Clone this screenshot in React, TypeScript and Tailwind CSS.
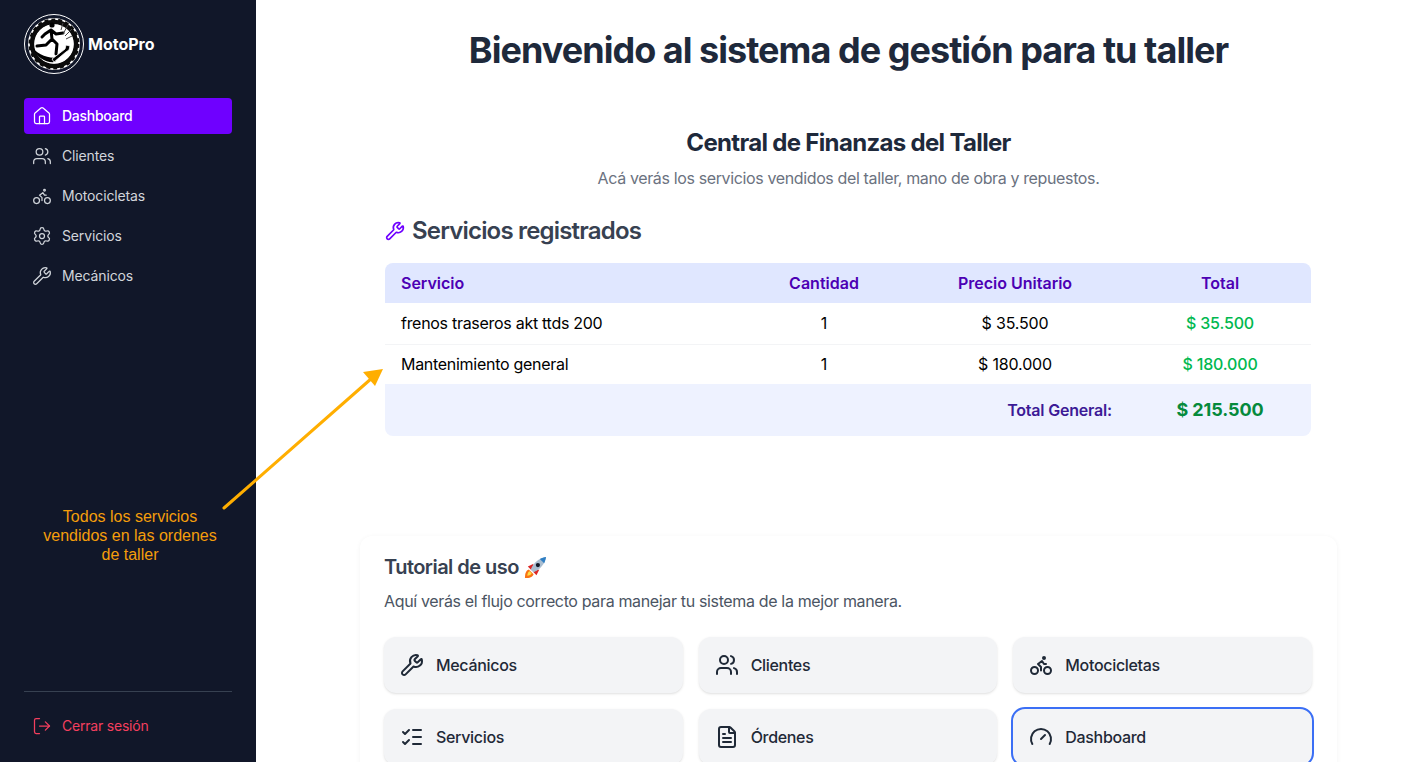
import React from 'react'
import { Bike, FileText, Gauge, House, ListChecks, LogOut, Settings, Users, Wrench } from 'lucide-react'

const navItems = [
  { label: 'Dashboard', icon: House, active: true },
  { label: 'Clientes', icon: Users },
  { label: 'Motocicletas', icon: Bike },
  { label: 'Servicios', icon: Settings },
  { label: 'Mecánicos', icon: Wrench },
]

const services = [
  { name: 'frenos traseros akt ttds 200', qty: 1, price: '$ 35.500', total: '$ 35.500' },
  { name: 'Mantenimiento general', qty: 1, price: '$ 180.000', total: '$ 180.000' },
]

const steps = [
  { label: 'Mecánicos', icon: Wrench },
  { label: 'Clientes', icon: Users },
  { label: 'Motocicletas', icon: Bike },
  { label: 'Servicios', icon: ListChecks },
  { label: 'Órdenes', icon: FileText },
  { label: 'Dashboard', icon: Gauge, selected: true },
]

function Logo() {
  return (
    <svg viewBox="0 0 60 60" className="w-[60px] h-[60px] shrink-0">
      <circle cx="30" cy="30" r="29.500" fill="#111729" stroke="#fff" strokeWidth="1" />
      <circle cx="30" cy="30" r="26" fill="#fff" />
      <circle cx="30" cy="30" r="22" fill="none" stroke="#0b0b0b" strokeWidth="4.500" />
      <circle cx="30" cy="30" r="24.500" fill="none" stroke="#0b0b0b" strokeWidth="2" strokeDasharray="4 3" />
      <circle cx="30" cy="30" r="19.500" fill="#fff" />
      <circle cx="28" cy="11" r="2.600" fill="#000" />
      <path d="M27 16l-6 4-3 3M27 16l5 4 7-1M27 16l1 9 5 5-1 10M28 25l-6 6-9 1" fill="none" stroke="#000" strokeWidth="3" strokeLinecap="round" strokeLinejoin="round" />
      <path d="M39 20l5-9M41 22l7-7M37 16l2-7M42 25l6-3" stroke="#444" strokeWidth="1" />
      <path d="M9 34c5 7 16 10 24 10l-2 4c-9 1-18-4-22-14z" fill="#000" />
      <path d="M28 45l13-10 1-4 4 1-1 4-3 2-12 10z" fill="#000" stroke="#fff" strokeWidth="0.800" />
    </svg>
  )
}

function Rocket() {
  return (
    <svg viewBox="0 0 24 24" className="w-[23px] h-[23px] inline-block">
      <path d="M1 23c0-5 1-8 4-9l5 5c-1 3-4 4-9 4z" fill="#f97316" />
      <path d="M3.500 20.500c0-2 1-4 2.500-4.500l2 2c-.5 1.500-2.500 2.500-4.500 2.500z" fill="#fde047" />
      <path d="M4 11l6-3-2 7zM13 20l3-6-7 2z" fill="#dc2626" />
      <path d="M7 14C10 7 16 2 23 1c-1 7-6 13-13 16z" fill="#a9bdd0" />
      <path d="M16.500 3c2-1 4.500-1.700 6.500-2-.3 2-1 4.500-2 6.500z" fill="#2f7fc4" />
      <circle cx="14.500" cy="9.500" r="2.200" fill="#111827" />
    </svg>
  )
}

function Sidebar() {
  return (
    <aside className="w-64 h-full shrink-0 bg-[#111729] flex flex-col px-6 pt-[14px] pb-[18px]">
      <div className="flex items-center gap-1">
        <Logo />
        <span className="text-white font-bold text-base">MotoPro</span>
      </div>
      <nav className="mt-6 flex flex-col gap-1">
        {navItems.map((item) => (
          <a
            key={item.label}
            href="#"
            className={`flex items-center gap-[10px] h-9 px-2 rounded text-sm ${
              item.active ? 'bg-[#6f00ff] text-white font-medium tracking-[-0.02em]' : 'text-[#d1d5db] font-normal tracking-[-0.01em]'
            }`}
          >
            <item.icon size={20} strokeWidth={1.5} />
            {item.label}
          </a>
        ))}
      </nav>
      <div className="mt-auto border-t border-[#374151] pt-4">
        <a href="#" className="flex items-center gap-[10px] h-9 px-2 text-sm font-normal tracking-[-0.015em] text-[#f43f5e]">
          <LogOut size={20} strokeWidth={1.5} />
          Cerrar sesión
        </a>
      </div>
    </aside>
  )
}

function ServicesTable() {
  return (
    <div className="ml-[25px] mr-[26px] mt-4 rounded-lg overflow-hidden">
      <table className="w-full table-fixed border-collapse text-base text-black">
        <colgroup>
          <col className="w-[362px]" />
          <col className="w-[154px]" />
          <col className="w-[228px]" />
          <col className="w-[182px]" />
        </colgroup>
        <thead>
          <tr className="h-10 bg-[#e0e7ff] text-[#4c00b4] font-semibold">
            <th className="px-4 text-left font-semibold">Servicio</th>
            <th className="px-4 text-center font-semibold">Cantidad</th>
            <th className="px-4 text-center font-semibold">Precio Unitario</th>
            <th className="px-4 text-center font-semibold">Total</th>
          </tr>
        </thead>
        <tbody>
          {services.map((s, i) => (
            <tr key={s.name} className={i === 0 ? 'h-[41px] border-b border-[#f3f4f6]' : 'h-10'}>
              <td className="px-4 tracking-[-0.018em]">{s.name}</td>
              <td className="px-4 text-center">{s.qty}</td>
              <td className="px-4 text-center tracking-[-0.01em]">{s.price}</td>
              <td className="px-4 text-center font-medium tracking-[-0.01em] text-[#00b84f]">{s.total}</td>
            </tr>
          ))}
        </tbody>
        <tfoot>
          <tr className="h-[52px] bg-[#eef2ff]">
            <td colSpan={3} className="pl-4 pr-[17px] text-right font-semibold tracking-[-0.012em] text-[#3c1a96]">Total General:</td>
            <td className="px-4 text-center font-bold text-lg tracking-[-0.005em] text-[#058a3c]">$ 215.500</td>
          </tr>
        </tfoot>
      </table>
    </div>
  )
}

function Tutorial() {
  return (
    <section className="mt-[100px] rounded-xl bg-white shadow-[0_1px_5px_rgba(0,0,0,0.05)] pl-6 pr-[25px] pt-[17px] pb-6">
      <h3 className="flex items-center gap-[5px] text-xl font-semibold leading-7 tracking-[-0.027em] text-[#374151]">
        Tutorial de uso <Rocket />
      </h3>
      <p className="mt-2 text-base leading-6 tracking-[-0.022em] text-[#4b5563]">
        Aquí verás el flujo correcto para manejar tu sistema de la mejor manera.
      </p>
      <div className="mt-6 grid grid-cols-3 gap-4">
        {steps.map((step) => (
          <div
            key={step.label}
            className={`flex items-center gap-3 h-14 px-4 rounded-xl bg-[#f3f4f6] shadow-sm text-base font-medium tracking-[-0.02em] text-[#1f2937] ${
              step.selected ? 'outline-2 outline-[#3b6ff5]' : ''
            }`}
          >
            <step.icon size={24} strokeWidth={2} />
            {step.label}
          </div>
        ))}
      </div>
    </section>
  )
}

export default function App() {
  return (
    <div className="relative flex h-screen overflow-hidden bg-white font-['Inter',sans-serif]">
      <Sidebar />
      <main className="flex-1 min-w-0 pl-[104px] pr-[66px] pt-[30px]">
        <h1 className="text-4xl leading-10 font-bold tracking-[-0.027em] text-center text-[#1e293b]">
          Bienvenido al sistema de gestión para tu taller
        </h1>
        <h2 className="mt-[57px] text-2xl leading-8 font-bold tracking-[-0.028em] text-center text-[#1e293b]">
          Central de Finanzas del Taller
        </h2>
        <p className="mt-[7px] text-base leading-6 tracking-[-0.023em] text-center text-[#6b7280]">
          Acá verás los servicios vendidos del taller, mano de obra y repuestos.
        </p>
        <div className="mx-[25px] mt-[25px] flex items-center gap-[7px] text-2xl leading-8 font-semibold tracking-[-0.034em] text-[#374151]">
          <Wrench size={20} strokeWidth={2} className="text-[#6f00ff]" />
          Servicios registrados
        </div>
        <ServicesTable />
        <Tutorial />
      </main>

      {/* annotation over the screenshot */}
      <svg className="absolute left-0 top-0 pointer-events-none" width="1403" height="762">
        <line x1="224" y1="508" x2="372" y2="378" stroke="#ffae00" strokeWidth="3" strokeLinecap="round" />
        <polygon points="383,369 375,386 363,372" fill="#ffae00" />
      </svg>
      <p className="absolute left-[40px] top-[507px] w-[180px] text-center text-base leading-[19px] text-[#f59e0b] font-['Liberation_Sans',sans-serif]">
        Todos los servicios vendidos en las ordenes de taller
      </p>
    </div>
  )
}
